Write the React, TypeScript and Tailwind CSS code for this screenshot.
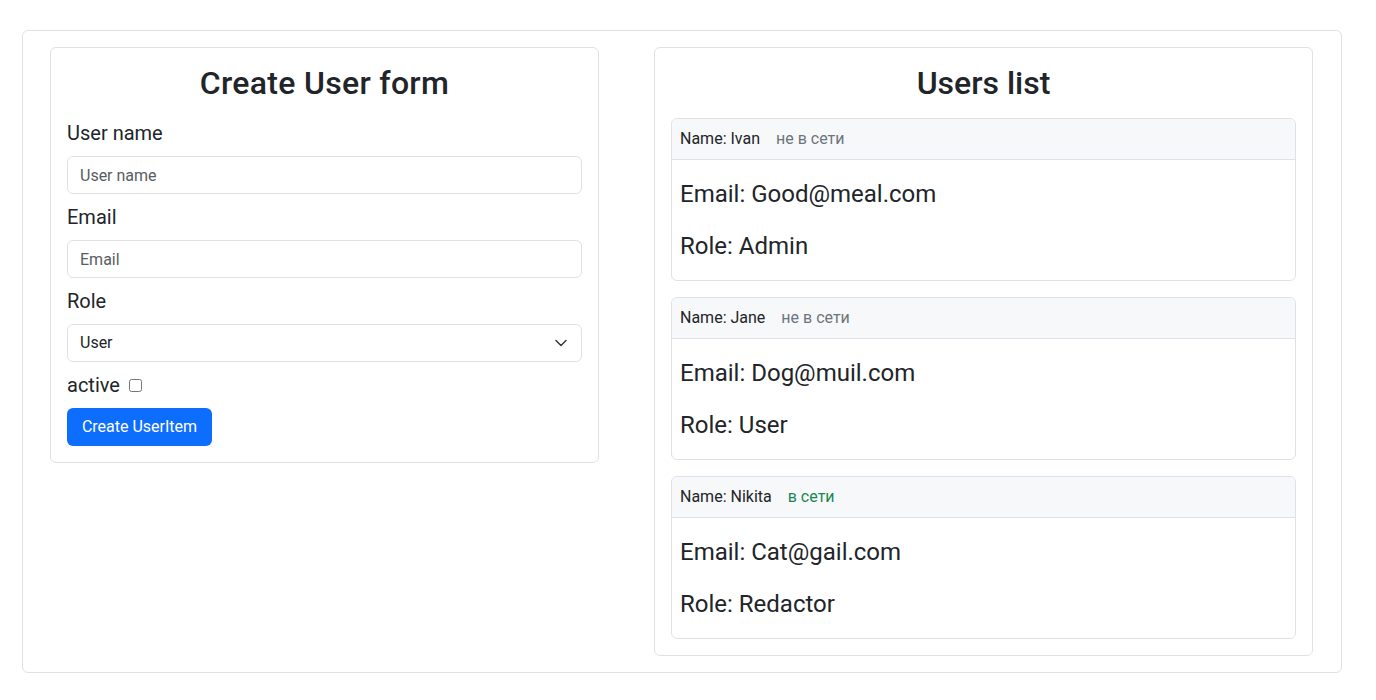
import React from "react";

const users = [
    { name: "Ivan", email: "Good@meal.com", role: "Admin", online: false },
    { name: "Jane", email: "Dog@muil.com", role: "User", online: false },
    { name: "Nikita", email: "Cat@gail.com", role: "Redactor", online: true },
];

function UserCard({ name, email, role, online }: { name: string; email: string; role: string; online: boolean }) {
    return (
        <div className="border border-[#dee2e6] rounded-md mb-4">
            <div className="flex items-center px-2 py-2 bg-[#f7f8f9] border-b border-[#dee2e6] rounded-t-md text-base leading-6">
                <span>Name: {name}</span>
                <span className={online ? "ml-4 text-[#198754]" : "ml-4 text-[#6c757d]"}>{online ? "в сети" : "не в сети"}</span>
            </div>
            <div className="px-2 pt-4">
                <p className="text-2xl leading-9 mb-4">Email: {email}</p>
                <p className="text-2xl leading-9 mb-4">Role: {role}</p>
            </div>
        </div>
    );
}

export default function App() {
    return (
        <div className="min-h-screen bg-white text-[#212529] pt-[30px] pl-[22px]" style={{ fontFamily: "Roboto, 'Noto Sans', sans-serif" }}>
            <div className="w-[1320px] border border-[#dee2e6] rounded-md flex items-start pl-[27px] pr-[28px] py-4 gap-[55px]">
                {/* form */}
                <div className="w-[549px] border border-[#dee2e6] rounded-md p-4">
                    <h2 className="text-[32px] leading-[1.2] font-medium text-center tracking-[0.3px] mb-4">Create User form</h2>
                    <div className="mb-2">
                        <label className="block text-xl leading-[30px] mb-2">User name</label>
                        <input
                            placeholder="User name"
                            className="block w-full h-[38px] px-3 border border-[#dee2e6] rounded-md text-base placeholder:text-[#595c5f] outline-none"
                        />
                    </div>
                    <div className="mb-2">
                        <label className="block text-xl leading-[30px] mb-2">Email</label>
                        <input
                            placeholder="Email"
                            className="block w-full h-[38px] px-3 border border-[#dee2e6] rounded-md text-base placeholder:text-[#595c5f] outline-none"
                        />
                    </div>
                    <div className="mb-2">
                        <label className="block text-xl leading-[30px] mb-2">Role</label>
                        <div className="relative">
                            <select className="block w-full h-[38px] pl-3 pr-9 border border-[#dee2e6] rounded-md text-base bg-white appearance-none outline-none">
                                <option>User</option>
                                <option>Admin</option>
                                <option>Redactor</option>
                            </select>
                            <svg className="absolute right-[15px] top-[15px] w-3 h-2 pointer-events-none" viewBox="0 0 12 8" fill="none" stroke="#343a40" strokeWidth="1.5" strokeLinecap="round" strokeLinejoin="round">
                                <path d="M1 1.5 6 6.5 11 1.5" />
                            </svg>
                        </div>
                    </div>
                    <div className="mb-2 text-xl leading-[30px] flex items-center">
                        <span>active</span>
                        <input type="checkbox" className="ml-[9px] w-[13px] h-[13px]" />
                    </div>
                    <button className="h-[38px] w-[145px] bg-[#0d6efd] text-white text-base rounded-md">Create UserItem</button>
                </div>

                {/* list */}
                <div className="w-[659px] border border-[#dee2e6] rounded-md px-4 pt-4">
                    <h2 className="text-[32px] leading-[1.2] font-medium text-center mb-4">Users list</h2>
                    {users.map((u) => (
                        <UserCard key={u.name} {...u} />
                    ))}
                </div>
            </div>
        </div>
    );
}
